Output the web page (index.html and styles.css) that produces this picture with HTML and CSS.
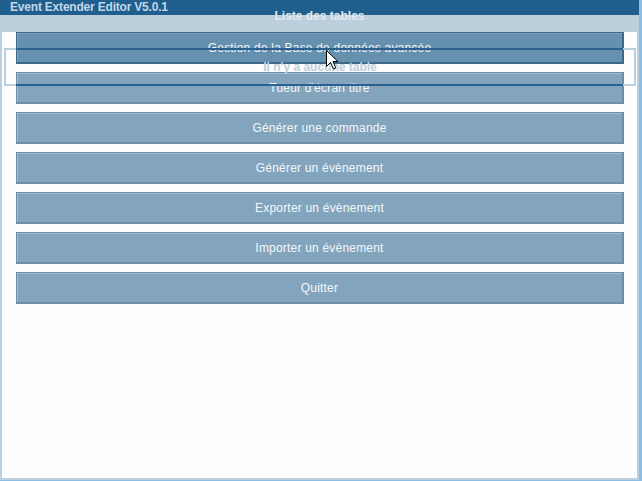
FILE: index.html
```html
<!DOCTYPE html>
<html lang="fr">
<head>
<meta charset="utf-8">
<title>Event Extender Editor V5.0.1</title>
<link rel="stylesheet" href="styles.css">
</head>
<body>
<div class="window">
  <div class="main">
    <div class="titlebar">Event Extender Editor V5.0.1</div>
    <div class="strip"></div>
    <div class="content">
      <button class="btn hover">Gestion de la Base de données avancée</button>
      <button class="btn">Tueur d'écran titre</button>
      <button class="btn">Générer une commande</button>
      <button class="btn">Générer un évènement</button>
      <button class="btn">Exporter un évènement</button>
      <button class="btn">Importer un évènement</button>
      <button class="btn">Quitter</button>
    </div>
  </div>
  <div class="edge"></div>

  <div class="tables-label">Liste des tables</div>
  <div class="ghost">
    <span class="ghost-line top"></span>
    <span class="ghost-line bottom"></span>
    <span class="ghost-text">Il n'y a aucune table</span>
  </div>
  <svg class="cursor" width="13" height="20" viewBox="0 0 13 20">
    <path d="M0.5 0.5 L0.5 16.5 L4.5 12.5 L7.5 19 L9.8 18 L7 11.5 L12 11.5 Z" fill="#fff" stroke="#000" stroke-width="1"/>
  </svg>
</div>
</body>
</html>
```
FILE: styles.css
```css
html, body {
  margin: 0;
  padding: 0;
  background: #fdfdfd;
}

.window {
  position: relative;
  width: 642px;
  height: 481px;
  display: flex;
  overflow: hidden;
  font-family: "Liberation Sans", Arial, sans-serif;
}

.main {
  width: 639px;
  display: flex;
  flex-direction: column;
}

.edge {
  width: 3px;
  background: #8dbde4;
}

.titlebar {
  height: 15px;
  background: #1f5e8d;
  color: #c3d6e6;
  font-weight: bold;
  font-size: 12px;
  line-height: 14px;
  letter-spacing: -0.2px;
  padding-left: 10px;
  white-space: nowrap;
}

.strip {
  height: 17px;
  background: #bccfdc;
}

.content {
  flex: 1;
  background: #fdfdfd;
  border-left: 2px solid #bccfdc;
  border-right: 2px solid #bccfdc;
  border-bottom: 2px solid #bccfdc;
  box-shadow: 0 1px 0 #8dbde4;
  margin-bottom: 1px;
  padding: 0 12px 0 14px;
  display: flex;
  flex-direction: column;
  gap: 8px;
}

.btn {
  height: 32px;
  width: 608px;
  margin: 0;
  padding: 0;
  background: #82a5bd;
  border: 1px solid #6e8ea3;
  border-bottom-width: 2px;
  border-right-width: 2px;
  box-shadow: inset 1px 1px 0 #9dbbd0;
  color: #f4f7fa;
  font-family: "Liberation Sans", Arial, sans-serif;
  font-size: 12px;
  line-height: 14px;
  letter-spacing: 0.2px;
  text-align: center;
  cursor: default;
}

.btn.hover {
  background: #6590ae;
  border-color: #3f6888;
  box-shadow: inset 1px 1px 0 #7ea2bd;
}

.tables-label {
  position: absolute;
  top: 9px;
  left: 0;
  width: 639px;
  text-align: center;
  font-weight: bold;
  font-size: 12px;
  line-height: 14px;
  color: #e2eaf1;
}

.ghost {
  position: absolute;
  left: 4px;
  top: 48px;
  width: 628px;
  height: 34px;
  border: 2px solid #bacfde;
}

.ghost-line {
  position: absolute;
  left: 10px;
  width: 607px;
  height: 2px;
  background: #2a6190;
}

.ghost-line.top { top: -2px; }
.ghost-line.bottom { bottom: -2px; }

.ghost-text {
  position: absolute;
  left: 0;
  right: 0;
  top: 10px;
  text-align: center;
  font-weight: bold;
  font-size: 12px;
  line-height: 14px;
  color: #bccfdc;
}

.cursor {
  position: absolute;
  left: 326px;
  top: 50px;
}
```
